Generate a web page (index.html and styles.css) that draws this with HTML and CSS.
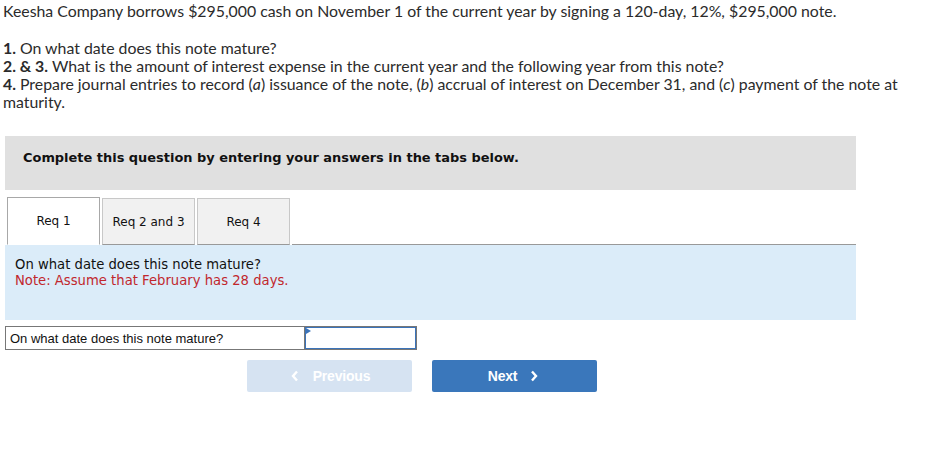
FILE: index.html
```html
<!DOCTYPE html>
<html>
<head>
<meta charset="utf-8">
<link rel="stylesheet" href="styles.css">
</head>
<body>
<div class="intro">
  <p class="lead">Keesha Company borrows $295,000 cash on November 1 of the current year by signing a 120-day, 12%, $295,000 note.</p>
  <p class="q"><span class="ln"><b>1.</b> On what date does this note mature?</span>
  <span class="ln"><b>2. &amp; 3.</b> What is the amount of interest expense in the current year and the following year from this note?</span>
  <span class="ln"><b>4.</b> Prepare journal entries to record (<i>a</i>) issuance of the note, (<i>b</i>) accrual of interest on December 31, and (<i>c</i>) payment of the note at maturity.</span></p>
</div>
<div class="panel">
  <div class="banner">Complete this question by entering your answers in the tabs below.</div>
  <div class="tabs">
    <div class="tab active">Req 1</div>
    <div class="tab">Req 2 and 3</div>
    <div class="tab">Req 4</div>
    <div class="tabline"></div>
  </div>
  <div class="info">
    <div>On what date does this note mature?</div>
    <div class="note">Note: Assume that February has 28 days.</div>
  </div>
  <div class="answer">
    <div class="label">On what date does this note mature?</div>
    <div class="field"><span class="flag"></span></div>
  </div>
  <div class="nav">
    <div class="btn prev"><svg width="8" height="12" viewBox="0 0 8 12"><polyline points="6,1.5 2,6 6,10.5" fill="none" stroke="#fff" stroke-width="2.4"/></svg><span>Previous</span></div>
    <div class="btn next"><span>Next</span><svg width="8" height="12" viewBox="0 0 8 12"><polyline points="2,1.5 6,6 2,10.5" fill="none" stroke="#fff" stroke-width="2.4"/></svg></div>
  </div>
</div>
</body>
</html>
```
FILE: styles.css
```css
html, body { margin: 0; padding: 0; background: #fff; }
body { padding: 2px 3px; }
.intro { font-family: "Lato", "Liberation Sans", sans-serif; font-size: 15.85px; line-height: 18px; color: #2b2b2b; width: 910px; }
.intro p { margin: 0; }
.intro .lead { margin-bottom: 19px; }
.intro .ln { display: block; }
.intro b { font-weight: 700; }
.panel { margin: 25px 0 0 2px; width: 851px; }
.banner { height: 54px; box-sizing: border-box; background: #e0e0e0; padding: 14px 18px 0; font-family: "DejaVu Sans", Verdana, sans-serif; font-weight: bold; font-size: 12.95px; line-height: 16px; color: #111; }
.tabs { display: flex; align-items: flex-end; margin-top: 7px; height: 48px; }
.tab { box-sizing: border-box; width: 93px; height: 47px; margin-right: 2px; border: 1px solid #c8c8c8; border-bottom: 1px solid #999; background: #f1f1f1; display: flex; align-items: center; justify-content: center; padding-top: 1px; font-family: "DejaVu Sans", Verdana, sans-serif; font-size: 12px; color: #111; }
.tab.active { margin-left: 2px; background: #fff; border-color: #a8a8a8; border-bottom: 1px solid #fff; height: 48px; padding-top: 0; }
.tabline { flex: 1; border-bottom: 1px solid #999; }
.info { height: 75px; box-sizing: border-box; background: #dbecf9; padding: 12px 10px 0; font-family: "DejaVu Sans", Verdana, sans-serif; font-size: 13.2px; line-height: 16px; color: #111; }
.info .note { color: #c1272d; }
.answer { display: flex; margin-top: 6px; height: 24px; }
.label { box-sizing: border-box; width: 299px; border: 1px solid #777; border-right: none; padding: 4px 4px 0; font-family: "Liberation Sans", Arial, sans-serif; font-size: 13px; line-height: 16px; color: #111; }
.field { position: relative; box-sizing: border-box; width: 113px; border: 1px solid #777; }
.field::after { content: ""; position: absolute; inset: 0; border: 1.5px solid #3b73b9; }
.flag { position: absolute; left: 1px; top: 1px; width: 0; height: 0; border-top: 3px solid transparent; border-bottom: 3px solid transparent; border-left: 5px solid #3b73b9; }
.nav { display: flex; gap: 20px; margin: 10px 0 0 242px; }
.btn { box-sizing: border-box; width: 165px; height: 32px; border-radius: 2px; display: flex; align-items: center; justify-content: center; font-family: "Liberation Sans", Arial, sans-serif; font-weight: bold; font-size: 14px; color: #fff; letter-spacing: -0.2px; }
.btn.prev { background: #d6e3f2; gap: 14px; padding-left: 2px; }
.btn.next { background: #3a77bb; gap: 13px; padding-right: 3px; }
```
